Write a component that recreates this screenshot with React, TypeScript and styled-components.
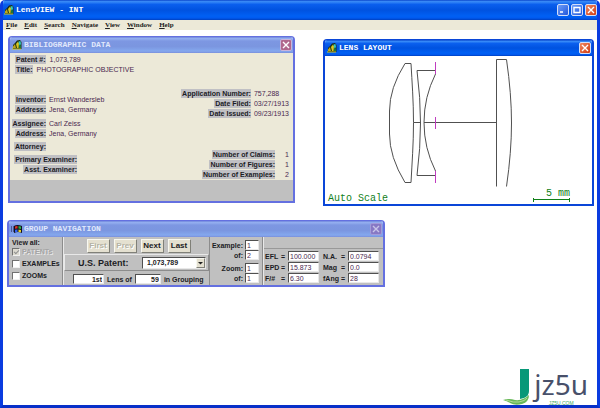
import React from "react";
import styled, { createGlobalStyle, css } from "styled-components";

const GlobalStyle = createGlobalStyle`
  *, *::before, *::after { box-sizing: border-box; }
  body {
    margin: 0;
    background: #fff;
    font-family: "Liberation Sans", Arial, sans-serif;
    font-size: 7px;
    line-height: 9px;
    color: #1c1c24;
  }
  button, input, select { font: inherit; color: inherit; margin: 0; }
`;

const activeBar = "linear-gradient(#0a46cc 0%, #3a8cf8 8%, #0a5fee 22%, #0052e0 50%, #0060f4 80%, #005af0 90%, #0040c0 100%)";
const idleBar = "linear-gradient(#6f84dc 0%, #95b0f0 10%, #7d97e2 25%, #7b96e0 60%, #84a8ee 88%, #7a8fdc 100%)";

const AppFrame = styled.main`
  display: flex;
  flex-direction: column;
  min-height: 100vh;
  border: 3px solid #0a3ce0;
  border-top: 0;
  border-bottom-color: #0830c8;
  border-radius: 5px 5px 0 0;
  background: #fff;
  overflow: hidden;
`;

const TitleBar = styled.header<{ $active?: boolean; $main?: boolean }>`
  display: flex;
  align-items: center;
  gap: 2px;
  height: ${(p) => (p.$main ? 20 : 16)}px;
  padding: 0 ${(p) => (p.$main ? 0 : 1)}px 0 2px;
  background: ${(p) => (p.$active ? activeBar : idleBar)};
  ${(p) => p.$main && css`margin: 0 -3px; padding: 0 3px 0 4px;`}
`;

const Title = styled.h1<{ $active?: boolean }>`
  flex: 1;
  margin: 0;
  font: bold 8px/12px "Liberation Mono", monospace;
  color: ${(p) => (p.$active ? "#fff" : "#e0e8fc")};
  white-space: nowrap;
`;

const Caption = styled.div`
  display: flex;
  gap: 2px;
`;

const CaptionButton = styled.button<{ $tone: "blue" | "red" | "dim" | "mauve" }>`
  display: grid;
  place-items: center;
  width: 12px;
  height: 12px;
  padding: 0;
  border: 1px solid ${(p) => (p.$tone === "mauve" ? "#c9b4dc" : p.$tone === "dim" ? "#a49ad8" : "#d4def8")};
  border-radius: 2px;
  color: ${(p) => (p.$tone === "dim" ? "#c8c4e8" : "#fff")};
  background: ${(p) =>
    ({
      blue: "linear-gradient(135deg, #6c9cf8, #2458dc)",
      red: "linear-gradient(135deg, #f08860, #d03c14)",
      dim: "#8778c4",
      mauve: "#b0688c",
    })[p.$tone]};
`;

const MenuBar = styled.nav`
  display: flex;
  align-items: center;
  gap: 7px;
  height: 10px;
  padding-left: 3px;
  background: #ece9d8;
`;

const MenuButton = styled.button`
  padding: 0;
  border: 0;
  background: none;
  font: bold 7px/9px "Liberation Serif", serif;
  color: #222;

  &::first-letter { text-decoration: underline; }
`;

const Desktop = styled.div`
  position: relative;
  flex: 1;
`;

const Win = styled.section<{ $x: number; $y: number; $w: number; $active?: boolean }>`
  position: absolute;
  left: ${(p) => p.$x}px;
  top: ${(p) => p.$y}px;
  width: ${(p) => p.$w}px;
  border: 2px solid ${(p) => (p.$active ? "#0a46d8" : "#6470e0")};
  border-top-width: 1px;
  border-radius: 4px 4px 0 0;
  overflow: hidden;
`;

const RecordBody = styled.div`
  display: flex;
  justify-content: space-between;
  min-height: 127px;
  padding: 2px 4px 1px 3px;
  background: #ece9d8;
`;

const RecordColumn = styled.div<{ $end?: boolean }>`
  display: flex;
  flex-direction: column;
  justify-content: ${(p) => (p.$end ? "flex-end" : "flex-start")};
  align-items: ${(p) => (p.$end ? "flex-end" : "flex-start")};
`;

const Facts = styled.dl<{ $labels: number; $top?: number }>`
  display: grid;
  grid-template-columns: ${(p) => p.$labels}px auto;
  row-gap: 1px;
  column-gap: 3px;
  margin: ${(p) => p.$top ?? 0}px 0 0;
`;

const Headline = styled.dl`
  display: flex;
  gap: 4px;
  margin: 0 0 1px 2px;
`;

const Term = styled.dt`
  justify-self: end;
  padding-left: 1px;
  background: #c0c0c4;
  font-weight: bold;
  white-space: nowrap;
`;

const Detail = styled.dd<{ $narrow?: boolean }>`
  min-width: ${(p) => (p.$narrow ? 11 : 0)}px;
  margin: 0;
  text-align: ${(p) => (p.$narrow ? "right" : "left")};
  color: #4a2850;
  white-space: nowrap;
`;

const StatusStrip = styled.footer`
  height: 21px;
  background: #c0c0c0;
`;

const LensBody = styled.div`
  background: #fff;
`;

const Drawing = styled.svg`
  display: block;
  width: 100%;
  height: auto;
`;

const LensFooter = styled.footer`
  display: flex;
  justify-content: space-between;
  align-items: flex-end;
  height: 17px;
  padding: 0 22px 0 3px;
  font: 10px/10px "Liberation Mono", monospace;
  color: #108018;
`;

const Scale = styled.div`
  display: flex;
  flex-direction: column;
  align-items: flex-end;
  padding-bottom: 2px;
  line-height: 9px;
`;

const NavBody = styled.form`
  display: flex;
  height: 48px;
  background: #c0c0c0;
  font-weight: bold;
`;

const Choices = styled.fieldset`
  display: flex;
  flex-direction: column;
  width: 54px;
  min-width: 0;
  margin: 0;
  padding: 1px 0 0 3px;
  border: 0;
  border-right: 1px solid #8c8c8c;
`;

const Legend = styled.legend`
  float: left;
  padding: 0;
`;

const Check = styled.label<{ $off?: boolean }>`
  display: flex;
  align-items: center;
  gap: 2px;
  color: ${(p) => (p.$off ? "#a4a4a4" : "inherit")};
  text-shadow: ${(p) => (p.$off ? "1px 1px #e8e8e8" : "none")};
  white-space: nowrap;

  & + & { margin-top: 3px; }
`;

const CheckInput = styled.input`
  appearance: none;
  display: grid;
  place-items: center;
  width: 8px;
  height: 8px;
  border: 1px solid;
  border-color: #707070 #f0f0f0 #f0f0f0 #707070;
  background: #fff;

  &:disabled { background: #dcdad0; }
  &:checked::before {
    content: "";
    width: 5px;
    height: 3px;
    border: solid #909090;
    border-width: 0 0 1px 1px;
    transform: rotate(-45deg);
  }
`;

const Browse = styled.div`
  display: flex;
  flex-direction: column;
  width: 147px;
  border-left: 1px solid #e8e8e8;
  border-right: 1px solid #8c8c8c;
`;

const Steps = styled.div`
  display: flex;
  justify-content: center;
  gap: 4px;
  padding: 2px 0 1px 4px;
`;

const StepButton = styled.button`
  width: 23px;
  height: 14px;
  padding: 0;
  border: 1px solid;
  border-color: #f8f8f0 #808078 #808078 #f8f8f0;
  background: #e4e0d0;
  font-size: 8px;
  line-height: 10px;
  font-weight: bold;

  &:disabled {
    color: #b4b2a4;
    text-shadow: 1px 1px #fff;
  }
`;

const PatentRow = styled.label`
  display: flex;
  align-items: center;
  justify-content: space-between;
  height: 17px;
  padding: 0 2px 0 13px;
  border: 1px solid;
  border-color: #e8e8e8 #8c8c8c #8c8c8c #e8e8e8;
  font-size: 9px;
  line-height: 12px;
`;

const SelectBox = styled.span`
  display: grid;
  grid-template-columns: 1fr 9px;
  align-items: center;
  width: 64px;
  height: 12px;
  border: 1px solid;
  border-color: #505050 #e8e8e8 #e8e8e8 #505050;
  background: #fff;
`;

const PatentSelect = styled.select`
  appearance: none;
  grid-area: 1 / 1 / 2 / 3;
  padding: 0 0 0 4px;
  border: 0;
  background: none;
  font-size: 7px;
  line-height: 9px;
  font-weight: bold;
`;

const Arrow = styled.svg`
  grid-area: 1 / 2 / 2 / 3;
  width: 9px;
  height: 10px;
  background: #e4e0d0;
  border: 1px solid;
  border-color: #f8f8f0 #808078 #808078 #f8f8f0;
  pointer-events: none;
`;

const CountRow = styled.div`
  display: flex;
  align-items: center;
  gap: 3px;
  padding: 3px 0 0 9px;
  white-space: nowrap;
`;

const Field = styled.input<{ $w: number; $end?: boolean }>`
  width: ${(p) => p.$w}px;
  height: 10px;
  padding: 0 1px;
  border: 1px solid;
  border-color: #505050 #e8e8e8 #e8e8e8 #505050;
  border-radius: 0;
  background: #fff;
  font-size: 7px;
  line-height: 8px;
  font-weight: ${(p) => (p.$end ? "bold" : "normal")};
  text-align: ${(p) => (p.$end ? "right" : "left")};
  color: ${(p) => (p.$end ? "#1c1c24" : "#4a2850")};
`;

const Pairs = styled.div`
  display: flex;
  flex-direction: column;
  justify-content: space-between;
  width: 53px;
  padding: 3px 3px 2px 0;
  border-right: 1px solid #8c8c8c;
`;

const FieldStack = styled.div`
  display: flex;
  flex-direction: column;
`;

const FieldLabel = styled.label`
  display: flex;
  align-items: center;
  justify-content: flex-end;
  gap: 2px;
  white-space: nowrap;
`;

const Optics = styled.div`
  display: flex;
  flex: 1;
  flex-direction: column;
  justify-content: flex-end;
  border-left: 1px solid #e8e8e8;
`;

const OpticsGrid = styled.div`
  display: grid;
  grid-template-columns: 54px 56px;
  column-gap: 4px;
  row-gap: 1px;
  padding: 2px 0 2px 1px;
  border-top: 1px solid #989898;
`;

const Metric = styled.label<{ $name: number }>`
  display: grid;
  grid-template-columns: ${(p) => p.$name}px 7px auto;
  align-items: center;
  white-space: nowrap;
`;

const Brand = styled.a`
  position: absolute;
  right: 9px;
  bottom: -1px;
  display: flex;
  align-items: flex-end;
  text-decoration: none;
`;

const BrandText = styled.span`
  display: flex;
  flex-direction: column;
  align-items: center;
`;

const BrandName = styled.span`
  font: 28px/34px "Noto Sans", sans-serif;
  color: #48506a;
`;

const BrandDomain = styled.span`
  font-size: 5px;
  line-height: 5px;
  color: #38a860;
`;

const LensIcon = () => (
  <svg width="10" height="10" viewBox="0 0 10 10" aria-hidden="true">
    <path d="M1 9V5l2-2 2-2.500 3-.5 1.500 2V9z" fill="#1c2c18" />
    <path d="M4 4l2-2.500 1 2L6.500 8H5z" fill="#d8c820" />
    <path d="M1 6.500L3 4l1 4H1z" fill="#c0a818" />
    <path d="M6.500 1.500L8.500 1l.5 3-1.500 2z" fill="#30c8c0" />
    <path d="M7 6l2-1v3H7z" fill="#187838" />
    <path d="M0 9h9" stroke="#d8c820" />
  </svg>
);

const FlagIcon = () => (
  <svg width="11" height="10" viewBox="0 0 11 10" aria-hidden="true">
    <path d="M3 2q3-2 8 0v7q-4-2-8 0z" fill="#101020" />
    <path d="M4 2.500q1.500-.8 2.500-.5v2.500q-1-.3-2.500.3z" fill="#e03020" />
    <path d="M7.500 2q1 0 2.500.6v2.500q-1.500-.6-2.500-.6z" fill="#28b040" />
    <path d="M4 5.800q1.500-.6 2.500-.3V8q-1-.3-2.500.2z" fill="#3060f0" />
    <path d="M7.500 5.500q1 0 2.500.6v2.200Q8.500 8 7.500 8z" fill="#e8d020" />
    <path d="M0 3h1m1 0h1M0 5h1m1 0h1M0 7h1m1 0h1" stroke="#181840" />
  </svg>
);

const Glyph = ({ d }: { d: string }) => (
  <svg width="8" height="8" viewBox="0 0 8 8" fill="none" stroke="currentColor" strokeWidth="1.4" aria-hidden="true">
    <path d={d} />
  </svg>
);

const CROSS = "M1 1l6 6M7 1L1 7";

const Fact = ({ term, value, narrow }: { term: string; value?: string; narrow?: boolean }) => (
  <>
    <Term>{term}</Term>
    <Detail $narrow={narrow}>{value}</Detail>
  </>
);

const Labeled = ({ label, value }: { label: string; value: string }) => (
  <FieldLabel>
    {label}
    <Field $w={14} defaultValue={value} />
  </FieldLabel>
);

const metrics: [string, string, string, string][] = [
  ["EFL", "100.000", "N.A.", "0.0794"],
  ["EPD", "15.873", "Mag", "0.0"],
  ["F/#", "6.30", "fAng", "28"],
];

function BibliographicWindow() {
  return (
    <Win $x={5} $y={6} $w={287}>
      <TitleBar>
        <LensIcon />
        <Title as="h2">BIBLIOGRAPHIC DATA</Title>
        <CaptionButton $tone="mauve" aria-label="Close"><Glyph d={CROSS} /></CaptionButton>
      </TitleBar>
      <RecordBody>
        <RecordColumn>
          <Headline><Term>Patent #:</Term><Detail>1,073,789</Detail></Headline>
          <Headline><Term>Title:</Term><Detail>PHOTOGRAPHIC OBJECTIVE</Detail></Headline>
          <Facts $labels={33} $top={20}>
            <Fact term="Inventor:" value="Ernst Wandersleb" />
            <Fact term="Address:" value="Jena, Germany" />
          </Facts>
          <Facts $labels={33} $top={5}>
            <Fact term="Assignee:" value="Carl Zeiss" />
            <Fact term="Address:" value="Jena, Germany" />
          </Facts>
          <Facts $labels={33} $top={4}>
            <Fact term="Attorney:" />
          </Facts>
          <Facts $labels={64} $top={4}>
            <Fact term="Primary Examiner:" />
            <Fact term="Asst. Examiner:" />
          </Facts>
        </RecordColumn>
        <RecordColumn $end>
          <Facts $labels={70}>
            <Fact term="Application Number:" value="757,288" />
            <Fact term="Date Filed:" value="03/27/1913" />
            <Fact term="Date Issued:" value="09/23/1913" />
          </Facts>
          <Facts $labels={76} $top={32}>
            <Fact term="Number of Claims:" value="1" narrow />
            <Fact term="Number of Figures:" value="1" narrow />
            <Fact term="Number of Examples:" value="2" narrow />
          </Facts>
        </RecordColumn>
      </RecordBody>
      <StatusStrip />
    </Win>
  );
}

function LensWindow() {
  return (
    <Win $x={320} $y={9} $w={271} $active>
      <TitleBar $active>
        <LensIcon />
        <Title as="h2" $active>LENS LAYOUT</Title>
        <CaptionButton $tone="red" aria-label="Close"><Glyph d={CROSS} /></CaptionButton>
      </TitleBar>
      <LensBody>
        <Drawing viewBox="0 0 267 131" fill="none" stroke="#505050" strokeWidth="1" role="img" aria-label="Lens layout">
          <path d="M80 7.500L86 7.500C87 26 88.500 45 88.500 66.500C88.500 88 87 107 86 126.500H80Q64.500 101 64.500 78V55Q64.500 32 80 7.500Z" />
          <path d="M110.500 14.500H92Q95.500 42 95.500 67T92 119.500H110.500M110.500 18Q99 41 99 66.500T110.500 115" />
          <path d="M88.500 66.500H95.500M99 66.500H171.500" />
          <path d="M171.500 130.500V3.500H181.500Q186.500 38 186.500 67T181.500 130.500" />
          <path d="M110.500 6V18M110.500 61V73M110.500 115V127" stroke="#c03cc0" />
        </Drawing>
        <LensFooter>
          <span>Auto Scale</span>
          <Scale>
            <span>5 mm</span>
            <svg width="37" height="4" viewBox="0 0 37 4" stroke="#108018" aria-hidden="true">
              <path d="M0 1.500H37M.5 0V4M36.500 0V4" />
            </svg>
          </Scale>
        </LensFooter>
      </LensBody>
    </Win>
  );
}

function NavigationWindow() {
  return (
    <Win $x={4} $y={190} $w={378}>
      <TitleBar>
        <FlagIcon />
        <Title as="h2">GROUP NAVIGATION</Title>
        <CaptionButton $tone="dim" aria-label="Close"><Glyph d={CROSS} /></CaptionButton>
      </TitleBar>
      <NavBody onSubmit={(e) => e.preventDefault()}>
        <Choices>
          <Legend>View all:</Legend>
          <Check $off><CheckInput type="checkbox" defaultChecked disabled />PATENTs</Check>
          <Check><CheckInput type="checkbox" />EXAMPLEs</Check>
          <Check><CheckInput type="checkbox" />ZOOMs</Check>
        </Choices>
        <Browse>
          <Steps>
            <StepButton type="button" disabled>First</StepButton>
            <StepButton type="button" disabled>Prev</StepButton>
            <StepButton type="button">Next</StepButton>
            <StepButton type="button">Last</StepButton>
          </Steps>
          <PatentRow>
            U.S. Patent:
            <SelectBox>
              <PatentSelect defaultValue="1,073,789">
                <option>1,073,789</option>
              </PatentSelect>
              <Arrow viewBox="0 0 7 8" aria-hidden="true"><path d="M1 3h5L3.500 5.500z" fill="#202020" /></Arrow>
            </SelectBox>
          </PatentRow>
          <CountRow>
            <Field $w={31} $end defaultValue="1st" aria-label="Lens position" />
            <span>Lens of</span>
            <Field $w={26} $end defaultValue="59" aria-label="Lens count" />
            <span>in Grouping</span>
          </CountRow>
        </Browse>
        <Pairs>
          <FieldStack>
            <Labeled label="Example:" value="1" />
            <Labeled label="of:" value="2" />
          </FieldStack>
          <FieldStack>
            <Labeled label="Zoom:" value="1" />
            <Labeled label="of:" value="1" />
          </FieldStack>
        </Pairs>
        <Optics>
          <OpticsGrid>
            {metrics.map(([a, av, b, bv]) => (
              <React.Fragment key={a}>
                <Metric $name={16}><span>{a}</span><span>=</span><Field $w={31} defaultValue={av} /></Metric>
                <Metric $name={18}><span>{b}</span><span>=</span><Field $w={31} defaultValue={bv} /></Metric>
              </React.Fragment>
            ))}
          </OpticsGrid>
        </Optics>
      </NavBody>
    </Win>
  );
}

export default function App() {
  return (
    <>
      <GlobalStyle />
      <AppFrame>
        <TitleBar $active $main>
          <LensIcon />
          <Title $active>LensVIEW - INT</Title>
          <Caption>
            <CaptionButton $tone="blue" aria-label="Minimize"><Glyph d="M1 6h3" /></CaptionButton>
            <CaptionButton $tone="blue" aria-label="Maximize"><Glyph d="M1 1.500h6v5H1z" /></CaptionButton>
            <CaptionButton $tone="red" aria-label="Close"><Glyph d={CROSS} /></CaptionButton>
          </Caption>
        </TitleBar>
        <MenuBar>
          {["File", "Edit", "Search", "Navigate", "View", "Window", "Help"].map((m) => (
            <MenuButton key={m}>{m}</MenuButton>
          ))}
        </MenuBar>
        <Desktop>
          <BibliographicWindow />
          <LensWindow />
          <NavigationWindow />
          <Brand href="#" aria-label="jz5u.com">
            <svg width="31" height="38" viewBox="0 0 31 38" aria-hidden="true">
              <path d="M17 1h9v22q0 5-5 7l-4 1z" fill="#089878" />
              <path d="M0 32q6-2 12 0 8 1 14-5 0 7-7 9-7 2-12-1-3-2-7-3z" fill="#68b858" />
              <path d="M3 32q8 3 13 2 6-1 8-4" fill="none" stroke="#b0dc98" />
            </svg>
            <BrandText>
              <BrandName>jz5u</BrandName>
              <BrandDomain>JZ5U.COM</BrandDomain>
            </BrandText>
          </Brand>
        </Desktop>
      </AppFrame>
    </>
  );
}
